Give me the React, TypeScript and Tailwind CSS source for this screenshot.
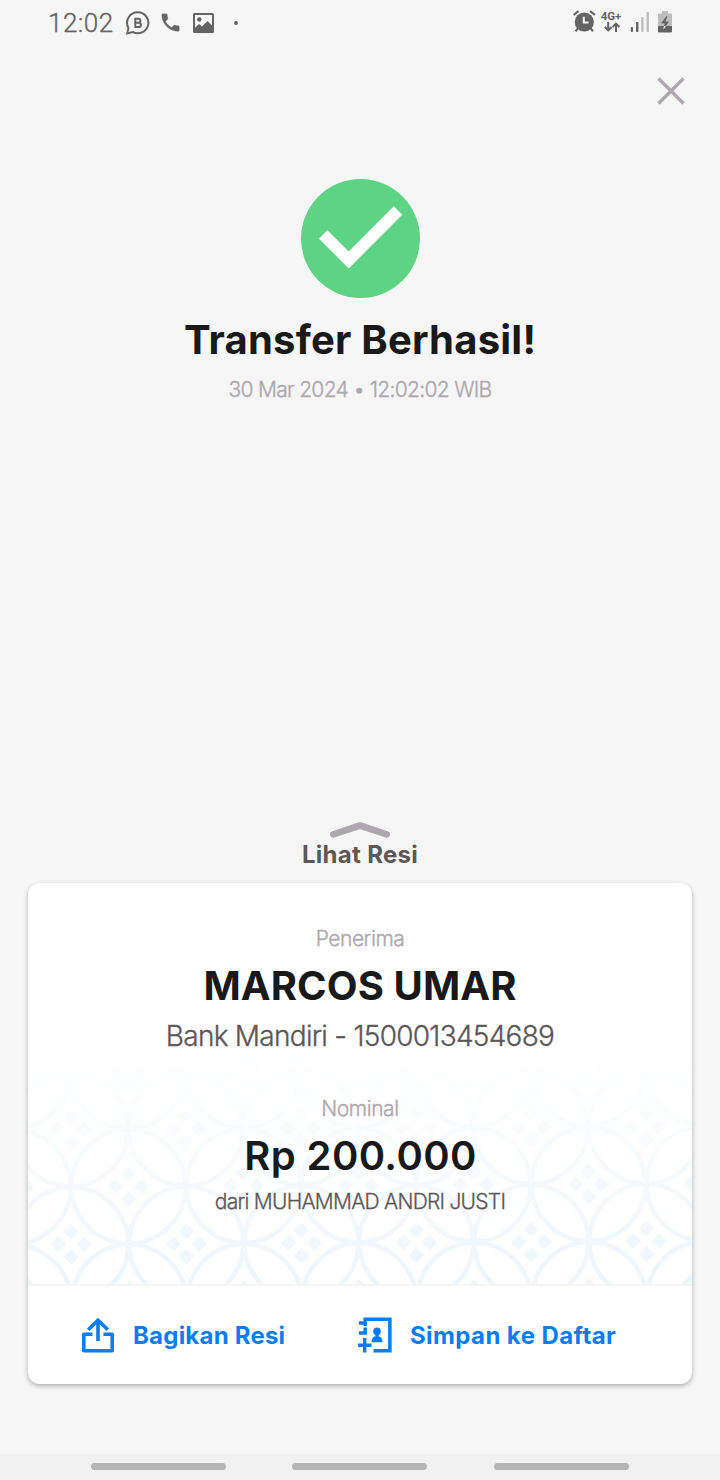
import type { ReactNode } from "react";

const STEP = 57.5;

function Batik() {
  const points: [number, number][] = [];
  for (let row = -1; row < 6; row++) {
    for (let col = -1; col < 8; col++) {
      const shift = row % 2 === 0 ? STEP : 0;
      points.push([43.3 + col * STEP * 2 + shift, 192 + STEP - row * STEP]);
    }
  }
  return (
    <svg className="absolute bottom-0 left-0 h-[232px] w-full" viewBox="0 0 664 232" fill="none" aria-hidden="true">
      <defs>
        <linearGradient id="fade" x1="0" y1="0" x2="0" y2="232" gradientUnits="userSpaceOnUse">
          <stop offset="0" stopColor="#fff" stopOpacity="0" />
          <stop offset="1" stopColor="#fff" stopOpacity="1" />
        </linearGradient>
        <mask id="fadeMask" maskUnits="userSpaceOnUse" x="0" y="0" width="664" height="232">
          <rect width="664" height="232" fill="url(#fade)" />
        </mask>
      </defs>
      <g mask="url(#fadeMask)">
        <g transform="rotate(-0.3 100 191)">
          {points.map(([x, y]) => (
            <g key={`${x}-${y}`}>
              <circle cx={x} cy={y} r={STEP - 0.5} stroke="#edf5fe" strokeWidth="4.5" />
              <path
                fill="#edf5fe"
                d={[[0, -12.7], [0, 12.7], [-13, 0], [13, 0]]
                  .map(([dx, dy]) => `M${x + dx} ${y + dy - 7.8}l7.8 7.8l-7.8 7.8l-7.8-7.8z`)
                  .join("")}
              />
            </g>
          ))}
        </g>
      </g>
    </svg>
  );
}

function StatusBar() {
  return (
    <header className="flex h-[45px] items-center pr-[47px] pl-[48px] text-[#646464]">
      <span className="w-[78px] pt-[2px] font-['Roboto'] text-[26px] leading-[43px] font-light tracking-[0.5px] whitespace-nowrap [-webkit-text-stroke:0.35px]">12:02</span>
      <svg className="h-6 w-6" viewBox="0 0 24 24" fill="none" aria-hidden="true">
        <path d="M12 1.3A10.5 10.5 0 1 1 6.8 21L1.3 22.4L2.5 17A10.5 10.5 0 0 1 12 1.3Z" stroke="currentColor" strokeWidth="2" />
        <path d="M9.3 7.8h3.1a2 2 0 0 1 0 4H9.3zM9.3 11.8h3.5a2.1 2.1 0 0 1 0 4.2H9.3z" stroke="currentColor" strokeWidth="2" />
      </svg>
      <svg className="mr-px ml-[9px] h-[23px] w-[23px]" viewBox="0 0 24 24" fill="currentColor" stroke="currentColor" strokeWidth="0.6" aria-hidden="true">
        <path d="M6.62 10.79c1.44 2.83 3.76 5.14 6.59 6.59l2.2-2.2c.27-.27.67-.36 1.02-.24 1.12.37 2.33.57 3.57.57.55 0 1 .45 1 1V20c0 .55-.45 1-1 1-9.39 0-17-7.61-17-17 0-.55.45-1 1-1h3.5c.55 0 1 .45 1 1 0 1.25.2 2.45.57 3.57.11.35.03.74-.25 1.02l-2.2 2.2z" />
      </svg>
      <svg className="ml-2.5 h-5 w-[21px]" viewBox="0 0 21 20" aria-hidden="true">
        <rect x="1" y="1" width="19" height="18" rx="0.5" fill="none" stroke="currentColor" strokeWidth="2" />
        <circle cx="6.3" cy="6.5" r="2.2" fill="currentColor" />
        <path d="M1 15.5L6 11l3 2.4L14.5 8L20 13.5V19H1z" fill="currentColor" />
      </svg>
      <span className="ml-[20px] h-1 w-1 rounded-full bg-current" />
      <svg className="mb-px ml-auto h-6 w-6" viewBox="0 0 24 24" fill="none" stroke="currentColor" aria-hidden="true">
        <circle cx="12.3" cy="12" r="9.6" fill="currentColor" stroke="none" />
        <path d="M1.6 5L6.5 1.2M23 5L18.1 1.2" strokeWidth="2.2" />
        <path d="M6.1 18.1L3.6 21.4M18.5 18.1L21 21.4" strokeWidth="2.2" />
        <path d="M11.8 6.8V12.6H16.5" stroke="#f6f6f6" strokeWidth="2" />
      </svg>
      <span className="mb-[3px] ml-1 flex w-[22px] flex-col items-center">
        <span className="font-['Roboto'] text-[11.5px] leading-[12px] font-bold whitespace-nowrap">4G+</span>
        <svg className="ml-[2px] h-[10px] w-4" viewBox="0 0 16 10" fill="none" stroke="currentColor" strokeWidth="2" aria-hidden="true">
          <path d="M4.2 0V8M0.8 5L4.2 8.4L7.6 5M12 10V2M8.6 5L12 1.6L15.4 5" />
        </svg>
      </span>
      <svg className="mb-[2px] ml-2 h-5 w-[19px]" viewBox="0 0 19 20" aria-hidden="true">
        <rect x="0.8" y="15" width="2.2" height="5" rx="0.7" fill="currentColor" />
        <rect x="6" y="10" width="2.4" height="10" rx="0.7" fill="currentColor" />
        <rect x="11.2" y="5" width="2.4" height="15" rx="0.7" fill="#bebebe" />
        <rect x="16.5" y="0" width="2.4" height="20" rx="0.7" fill="#bebebe" />
      </svg>
      <svg className="mb-[2px] ml-[9px] h-[22px] w-[15px]" viewBox="0 0 15 22" aria-hidden="true">
        <path d="M4 0H10V2.5H13.5Q14 2.5 14 3V15H0V3Q0 2.5 0.5 2.5H4z" fill="#bebebe" />
        <path d="M0 15H14V20.5Q14 21.5 13 21.5H1Q0 21.5 0 20.5z" fill="currentColor" />
        <path d="M8.3 5.2L3.1 12.2L6.7 12.6L6 15H8L10.9 10.8L7.5 10.4L9.3 5.6z" fill="currentColor" />
        <path d="M6 15H8.1L5.3 18.8z" fill="#fff" />
      </svg>
    </header>
  );
}

function Action({ label, icon, className }: { label: string; icon: ReactNode; className: string }) {
  return (
    <button type="button" className={`flex items-center text-[24px] font-bold whitespace-nowrap text-[#087cf5] ${className}`}>
      {icon}
      <span className="pt-[2px]">{label}</span>
    </button>
  );
}

function ShareIcon() {
  return (
    <svg className="h-9 w-8" viewBox="0 0 32 36" fill="none" stroke="currentColor" strokeWidth="3.6" aria-hidden="true">
      <path d="M10.5 17.3H1.8V33.7H30.2V17.3H21.5" strokeLinejoin="round" />
      <path d="M16 24V3.5M6.2 12.8L16 3.2L25.8 12.8" />
    </svg>
  );
}

function ContactIcon() {
  return (
    <svg className="h-9 w-[34px]" viewBox="0 0 34 36" fill="none" stroke="currentColor" strokeWidth="3.5" aria-hidden="true">
      <path d="M1 6H7.2M7.2 9V2.2H31.9V33.8H15.5M7.2 10.5V17.2M1 15.9H8.9" />
      <path d="M6.7 21V35.5M-0.5 28.2H13.5" />
      <g fill="currentColor" stroke="none">
        <circle cx="19" cy="14.4" r="3.8" />
        <path d="M17.3 16H20.7V19.3Q24.5 20.4 24.5 25.3H13.5Q13.5 20.4 17.3 19.3z" />
      </g>
    </svg>
  );
}

export default function App() {
  return (
    <div className="flex h-[1480px] w-[720px] flex-col overflow-hidden bg-[#f6f6f6] font-['Inter',sans-serif] text-[#19191a]">
      <StatusBar />
      <div className="flex h-[134px] justify-end pt-[31px] pr-[34px]">
        <svg className="h-[30px] w-[30px]" viewBox="0 0 30 30" fill="none" stroke="#aea7af" strokeWidth="3.3" aria-label="Tutup">
          <path d="M2.5 2.5L27.5 27.5M27.5 2.5L2.5 27.5" />
        </svg>
      </div>

      <section className="flex h-[641px] flex-col items-center">
        <svg className="h-[119px] w-[119px] shrink-0" viewBox="0 0 119 119" fill="none" aria-hidden="true">
          <circle cx="59.5" cy="59.5" r="59.5" fill="#5ed384" />
          <path d="M22.2 55.5L47.7 80.9L97 31.6" stroke="#fff" strokeWidth="12" />
        </svg>
        <h1 className="mt-[17px] text-[40px] leading-[50px] font-bold tracking-[0.22px] whitespace-nowrap">Transfer Berhasil!</h1>
        <p className="mt-[10px] text-[21px] leading-[30px] font-light tracking-[-0.68px] whitespace-nowrap text-[#aea7af] [-webkit-text-stroke:0.35px]">30 Mar 2024 • 12:02:02 WIB</p>
      </section>

      <div className="flex h-[63px] flex-col items-center">
        <svg className="h-[20px] w-[62px]" viewBox="0 0 62 20" fill="none" aria-hidden="true">
          <path d="M4.3 14.4L31 5.5L57.7 14.4" stroke="#aea7af" strokeWidth="6.6" strokeLinecap="round" strokeLinejoin="round" />
        </svg>
        <p className="text-[24px] leading-[30px] font-bold tracking-[0.3px] whitespace-nowrap text-[#5d5757]">Lihat Resi</p>
      </div>

      <main className="mx-7 flex h-[501px] flex-col overflow-hidden rounded-[12px] bg-white shadow-[0_2px_5px_rgba(0,0,0,0.3)]">
        <section className="relative flex h-[403px] flex-col items-center border-b-2 border-[#f5f5f5] pt-[41px] whitespace-nowrap">
          <Batik />
          <p className="relative text-[21px] leading-[30px] font-light tracking-[-0.45px] text-[#aea7af] [-webkit-text-stroke:0.35px]">Penerima</p>
          <h2 className="relative mt-[7px] text-[40px] leading-[50px] font-bold tracking-[0.1px]">MARCOS UMAR</h2>
          <p className="relative mt-[5px] text-[28px] leading-10 font-light tracking-[-0.72px] text-[#5d5757] [-webkit-text-stroke:0.35px]">Bank Mandiri - 1500013454689</p>
          <p className="relative mt-[38px] text-[21px] leading-[30px] font-light tracking-[-0.45px] text-[#aea7af] [-webkit-text-stroke:0.35px]">Nominal</p>
          <p className="relative mt-[7px] ml-px text-[40px] leading-[50px] font-semibold tracking-[0.4px]">Rp 200.000</p>
          <p className="relative mt-[6px] text-[21px] leading-[30px] font-light tracking-[-0.75px] text-[#5d5757] [-webkit-text-stroke:0.3px]">dari MUHAMMAD ANDRI JUSTI</p>
        </section>
        <div className="flex h-[98px] items-center">
          <Action label="Bagikan Resi" icon={<ShareIcon />} className="ml-[54px] w-[276px] gap-[19px] tracking-[0.22px]" />
          <Action label="Simpan ke Daftar" icon={<ContactIcon />} className="gap-[18px] tracking-[0.4px]" />
        </div>
      </main>

      <nav className="mt-auto flex h-[26px] items-center bg-[#f1f1f1] pb-px pl-[91px]">
        <span className="h-[7px] w-[135px] rounded-full bg-[#b5b5b5]" />
        <span className="ml-[66px] h-[7px] w-[135px] rounded-full bg-[#b5b5b5]" />
        <span className="ml-[67px] h-[7px] w-[135px] rounded-full bg-[#b5b5b5]" />
      </nav>
    </div>
  );
}
